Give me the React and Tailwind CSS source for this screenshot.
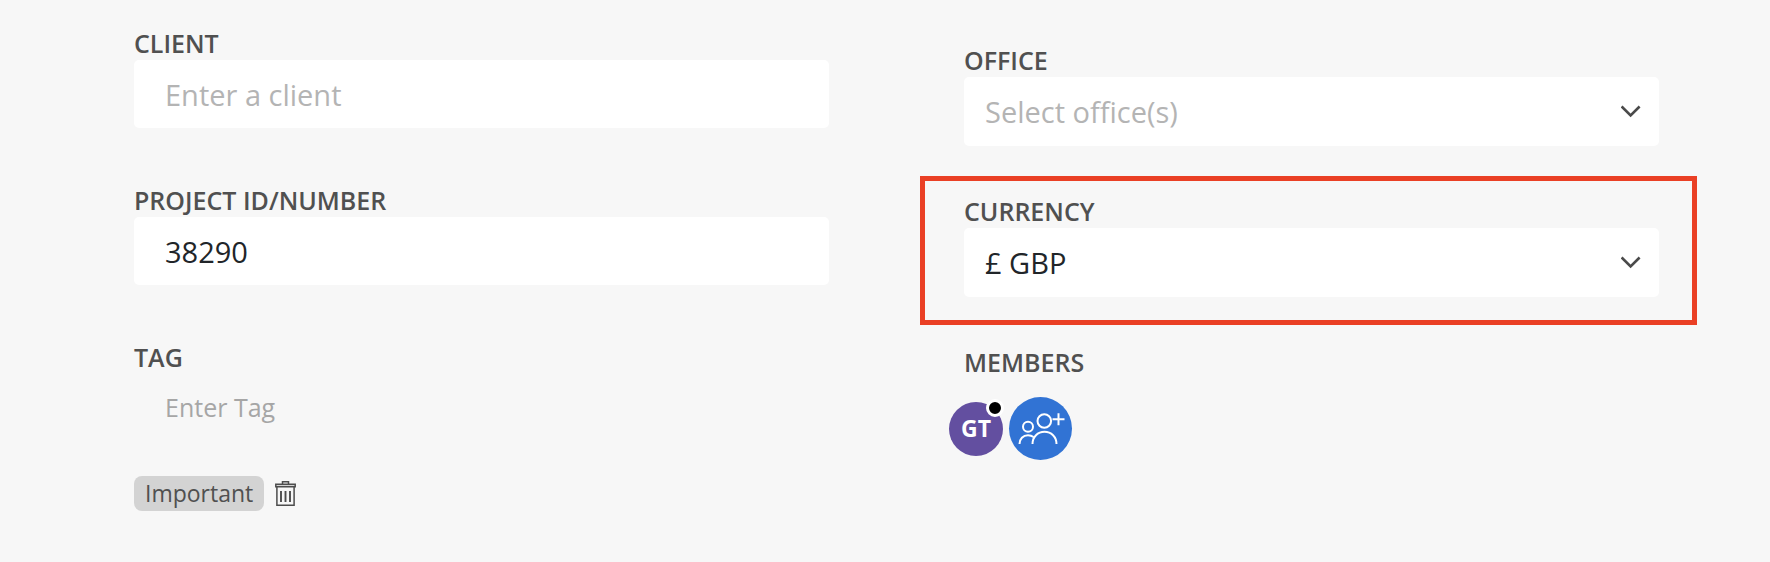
import { useState } from 'react'

const labelClass = 'block pb-0.5 text-[25px] leading-[30px] font-semibold text-[#505050]'
const inputClass =
  'block w-full h-[68px] rounded-[5px] pl-[31px] pr-4 text-[29px] text-[#212529] outline-none'

function TextField({ id, label, className, ...props }) {
  return (
    <div>
      <label htmlFor={id} className={labelClass}>{label}</label>
      <input id={id} type="text" className={`${inputClass} ${className}`} {...props} />
    </div>
  )
}

function SelectField({ id, label, options, placeholder, defaultValue = '', highlighted }) {
  const [value, setValue] = useState(defaultValue)

  return (
    <div className="relative">
      <label htmlFor={id} className={labelClass}>{label}</label>
      <div className="relative">
        <select
          id={id}
          value={value}
          onChange={(e) => setValue(e.target.value)}
          className={`block w-full h-[69px] appearance-none rounded-[5px] bg-white pl-[21px] pr-14 text-[29px] outline-none ${
            value ? 'text-[#212529]' : 'text-[#b4b4b4]'
          }`}
        >
          {placeholder && <option value="">{placeholder}</option>}
          {options.map((option) => (
            <option key={option} value={option}>{option}</option>
          ))}
        </select>
        <svg
          viewBox="0 0 20 13"
          className="pointer-events-none absolute top-7 right-[18px] h-[13px] w-5"
          fill="none"
          stroke="#4a4a4a"
          strokeWidth="2.6"
        >
          <path d="M.6 1.500l9 9 9-9" />
        </svg>
      </div>
      {highlighted && (
        <div className="pointer-events-none absolute -top-5 -right-[38px] -bottom-7 -left-11 border-5 border-[#ea4025]" />
      )}
    </div>
  )
}

function TrashIcon() {
  return (
    <svg viewBox="0 0 21 25" className="h-[25px] w-[21px]" fill="none" stroke="#4d4d4d" strokeWidth="1.5">
      <path d="M7.5 3V.8h6V3" />
      <path d="M.8 3.2h19.4v2.600H.8z" fill="#d3d3d3" />
      <path d="M1.900 6v18.200h17.200V6" />
      <path d="M6 10v11M10.500 10v11M15 10v11" strokeWidth="1.900" />
    </svg>
  )
}

function AddMembersIcon() {
  return (
    <svg viewBox="0 0 63 63" className="h-full w-full" fill="none" stroke="#fff" strokeWidth="2">
      <circle cx="19" cy="29.7" r="5" />
      <circle cx="35.3" cy="24" r="6.8" />
      <path d="M10.500 47c0-5 3.500-8.800 8.500-8.800 2.200 0 4 .6 5.500 1.800" />
      <path d="M23.500 47c0-7 5.200-12.200 12-12.200S47.500 40 47.500 47" />
      <path d="M49.500 16.300v12M43.500 22.300h12" />
    </svg>
  )
}

export default function App() {
  const [tags, setTags] = useState(['Important'])

  return (
    <form className="grid min-h-screen grid-cols-2 items-start gap-x-[135px] bg-[#f7f7f7] pt-7 pr-[111px] pb-12 pl-[134px] font-['Open_Sans',sans-serif]">
      <div className="flex flex-col gap-[57px]">
        <TextField
          id="client"
          label="CLIENT"
          placeholder="Enter a client"
          className="bg-white placeholder:text-[#b4b4b4]"
        />
        <TextField id="project-id" label="PROJECT ID/NUMBER" defaultValue="38290" className="bg-white" />
        <div>
          <label htmlFor="tag" className={labelClass}>TAG</label>
          <input
            id="tag"
            type="text"
            placeholder="Enter Tag"
            className="block h-[66px] w-full bg-transparent pl-[31px] text-[25px] text-[#212529] outline-none placeholder:text-[#a6a6a6]"
          />
          <ul className="mt-9 flex flex-col gap-2">
            {tags.map((tag) => (
              <li key={tag} className="flex items-center gap-[11px]">
                <span className="rounded-lg bg-[#d3d3d3] px-[11px] text-[23px] leading-[35px] text-[#505050]">
                  {tag}
                </span>
                <button
                  type="button"
                  aria-label={`Remove ${tag}`}
                  onClick={() => setTags(tags.filter((t) => t !== tag))}
                >
                  <TrashIcon />
                </button>
              </li>
            ))}
          </ul>
        </div>
      </div>

      <div className="flex flex-col gap-[50px] pt-[17px]">
        <SelectField id="office" label="OFFICE" placeholder="Select office(s)" options={['London', 'New York']} />
        <SelectField
          id="currency"
          label="CURRENCY"
          options={['£ GBP', '$ USD', '€ EUR']}
          defaultValue="£ GBP"
          highlighted
        />
        <div>
          <h2 className={labelClass}>MEMBERS</h2>
          <div className="mt-[18px] -ml-[15px] flex items-center gap-1.5">
            <div className="relative flex size-[54px] items-center justify-center rounded-full bg-[#634fa0] text-[23px] font-bold text-white">
              GT
              <span className="absolute -top-[3px] -right-px size-[18px] rounded-full border-3 border-white bg-black" />
            </div>
            <button type="button" aria-label="Add members" className="size-[63px] rounded-full bg-[#3173d4]">
              <AddMembersIcon />
            </button>
          </div>
        </div>
      </div>
    </form>
  )
}
